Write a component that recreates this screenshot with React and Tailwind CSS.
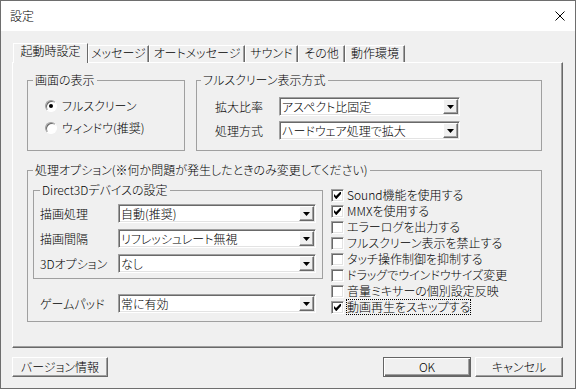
import React from 'react'

const sunken = 'border border-t-[#a0a0a0] border-l-[#a0a0a0] border-r-white border-b-white shadow-[inset_1px_1px_0_#696969,inset_-1px_-1px_0_#e3e3e3]'
const raised = 'border border-t-white border-l-white border-r-[#696969] border-b-[#696969] shadow-[inset_-1px_-1px_0_#a0a0a0]'

function Tab({ label, active, w }) {
  if (active) {
    return (
      <div
        className={`relative z-10 -mb-px h-[20px] bg-[#f0f0f0] border-t border-l border-white border-r border-r-[#696969] flex justify-center leading-[14px] ${w}`}
      >
        {label}
      </div>
    )
  }
  return (
    <div
      className={`h-[17px] border-t border-l border-white border-r border-r-[#696969] shadow-[inset_-1px_0_0_#a0a0a0] flex justify-center leading-[14px] ${w}`}
    >
      {label}
    </div>
  )
}

function Group({ legend, ml = 'ml-[5px]', className = '', children }) {
  return (
    <fieldset className={`border border-[#a0a0a0] min-w-0 ${className}`}>
      <legend className={`${ml} px-[2px] leading-[14px]`}>{legend}</legend>
      {children}
    </fieldset>
  )
}

function Select({ value, w }) {
  return (
    <div className={`h-[19px] bg-white p-px flex ${sunken} ${w}`}>
      <div className="flex-1 pl-px leading-[15px] whitespace-nowrap overflow-hidden">{value}</div>
      <div className={`w-[15px] h-[15px] bg-[#f0f0f0] flex items-center justify-center ${raised}`}>
        <svg width="7" height="4" viewBox="0 0 7 4">
          <path d="M0 0 H7 L3.5 4 Z" fill="#000" />
        </svg>
      </div>
    </div>
  )
}

function Check({ checked, label, focus }) {
  return (
    <div className="h-[16px] flex items-center">
      <div className={`w-[13px] h-[13px] bg-white flex items-center justify-center ${sunken}`}>
        {checked && (
          <svg width="7" height="7" viewBox="0 0 7 7">
            <path d="M0 2 L2 4 L6 0 L7 0 L7 2 L2.5 7 L2 7 L0 4.5 Z" fill="#000" />
          </svg>
        )}
      </div>
      <span className={`ml-[3px] leading-[14px] whitespace-nowrap ${focus ? 'outline outline-1 outline-dotted outline-black' : ''}`}>
        {label}
      </span>
    </div>
  )
}

function Radio({ checked, label }) {
  return (
    <div className="h-[22px] flex items-center">
      <div className="w-[12px] h-[12px] rounded-full bg-white border border-t-[#a0a0a0] border-l-[#a0a0a0] border-r-white border-b-white shadow-[inset_1px_1px_0_#696969] flex items-center justify-center">
        {checked && <div className="w-[4px] h-[4px] rounded-full bg-black" />}
      </div>
      <span className="ml-[5px] leading-[14px]">{label}</span>
    </div>
  )
}

function Button({ children, w, isDefault }) {
  const cls = isDefault
    ? 'border border-[#646464] shadow-[inset_1px_1px_0_#fff,inset_-1px_-1px_0_#696969,inset_-2px_-2px_0_#a0a0a0]'
    : raised
  return (
    <div className={`h-[20px] flex items-center justify-center leading-[14px] bg-[#f0f0f0] ${cls} ${w}`}>
      {children}
    </div>
  )
}

const checks = [
  { label: 'Sound機能を使用する', checked: true },
  { label: 'MMXを使用する', checked: true },
  { label: 'エラーログを出力する' },
  { label: 'フルスクリーン表示を禁止する' },
  { label: 'タッチ操作制御を抑制する' },
  { label: 'ドラッグでウインドウサイズ変更' },
  { label: '音量ミキサーの個別設定反映' },
  { label: '動画再生をスキップする', checked: true, focus: true },
]

export default function App() {
  return (
    <div className="w-[576px] h-[389px] bg-[#f0f0f0] border border-[#6e6e6e] text-[12px] font-light text-black font-['Noto_Sans_CJK_JP',sans-serif] [font-feature-settings:'palt'] flex flex-col overflow-hidden">
      {/* Title bar */}
      <div className="h-[30px] bg-white flex items-center justify-between pl-[9px] pr-[9px]">
        <span className="leading-[14px]">設定</span>
        <svg width="10" height="10" viewBox="0 0 10 10" className="mr-[1px]">
          <path d="M0.5 0.5 L9.5 9.5 M9.5 0.5 L0.5 9.5" stroke="#000" strokeWidth="1" />
        </svg>
      </div>

      {/* Tabs */}
      <div className="mt-[12px] ml-[12px] h-[19px] flex items-end">
        <Tab label="起動時設定" active w="w-[75px]" />
        <Tab label="メッセージ" w="w-[61px]" />
        <Tab label="オートメッセージ" w="w-[96px]" />
        <Tab label="サウンド" w="w-[53px]" />
        <Tab label="その他" w="w-[47px]" />
        <Tab label="動作環境" w="w-[60px]" />
      </div>

      {/* Panel */}
      <div className="ml-[11px] w-[551px] h-[286px] border-t border-l border-white border-r border-b border-r-[#696969] border-b-[#696969] shadow-[inset_-1px_-1px_0_#a0a0a0] pt-[10px] pl-[14px]">
        <div className="flex gap-[11px]">
          <Group legend="画面の表示" className="w-[158px] h-[78px]">
            <div className="pt-[8px] pl-[17px]">
              <Radio checked label="フルスクリーン" />
              <Radio label="ウィンドウ(推奨)" />
            </div>
          </Group>
          <Group legend="フルスクリーン表示方式" ml="ml-[4px]" className="w-[346px] h-[78px]">
            <div className="pt-[10px] pl-[18px] flex flex-col gap-[5px]">
              <div className="flex items-center">
                <span className="w-[64px] leading-[14px]">拡大比率</span>
                <Select value="アスペクト比固定" w="w-[181px]" />
              </div>
              <div className="flex items-center">
                <span className="w-[64px] leading-[14px]">処理方式</span>
                <Select value="ハードウェア処理で拡大" w="w-[181px]" />
              </div>
            </div>
          </Group>
        </div>

        <Group
          legend="処理オプション(※何か問題が発生したときのみ変更してください)"
          className="mt-[12px] w-[515px] h-[159px]"
        >
          <div className="pl-[5px] flex gap-[8px]">
            <div className="pt-[6px]">
              <Group legend="Direct3Dデバイスの設定" ml="ml-[6px]" className="w-[290px] h-[96px]">
                <div className="pt-[7px] pl-[6px] flex flex-col gap-[6px]">
                  <div className="flex items-center">
                    <span className="w-[78px] leading-[14px]">描画処理</span>
                    <Select value="自動(推奨)" w="w-[198px]" />
                  </div>
                  <div className="flex items-center">
                    <span className="w-[78px] leading-[14px]">描画間隔</span>
                    <Select value="リフレッシュレート無視" w="w-[198px]" />
                  </div>
                  <div className="flex items-center">
                    <span className="w-[78px] leading-[14px]">3Dオプション</span>
                    <Select value="なし" w="w-[198px]" />
                  </div>
                </div>
              </Group>
              <div className="mt-[15px] pl-[7px] flex items-center">
                <span className="w-[78px] leading-[14px]">ゲームパッド</span>
                <Select value="常に有効" w="w-[198px]" />
              </div>
            </div>
            <div className="pt-[10px]">
              {checks.map((c) => (
                <Check key={c.label} {...c} />
              ))}
            </div>
          </div>
        </Group>
      </div>

      {/* Footer */}
      <div className="mt-[9px] ml-[11px] flex items-center">
        <Button w="w-[96px]">バージョン情報</Button>
        <div className="ml-auto mr-[12px] flex gap-[4px]">
          <Button w="w-[88px]" isDefault>OK</Button>
          <Button w="w-[88px]">キャンセル</Button>
        </div>
      </div>
    </div>
  )
}
